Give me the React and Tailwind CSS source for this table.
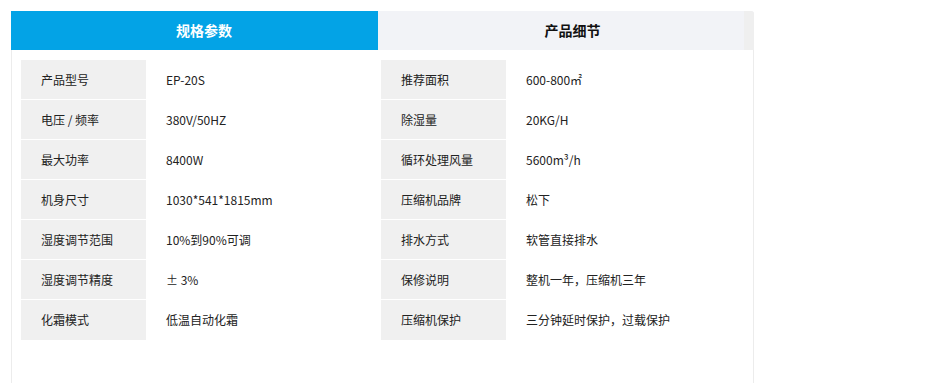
import React from "react";

const left = [
  ["产品型号", "EP-20S"],
  ["电压 / 频率", "380V/50HZ"],
  ["最大功率", "8400W"],
  ["机身尺寸", "1030*541*1815mm"],
  ["湿度调节范围", "10%到90%可调"],
  ["湿度调节精度", "± 3%"],
  ["化霜模式", "低温自动化霜"],
];
const right = [
  ["推荐面积", "600-800㎡"],
  ["除湿量", "20KG/H"],
  ["循环处理风量", "5600m³/h"],
  ["压缩机品牌", "松下"],
  ["排水方式", "软管直接排水"],
  ["保修说明", "整机一年，压缩机三年"],
  ["压缩机保护", "三分钟延时保护，过载保护"],
];

function Table({ rows, w }) {
  return (
    <div className={`flex flex-col ${w}`}>
      {rows.map(([k, v], i) => (
        <div key={k} className={`flex h-[40px] ${i === rows.length - 1 ? "h-[39px]" : "border-b border-white"}`}>
          <div className="w-[125px] bg-[#f0f0f0] pl-[20px] flex items-center text-[12px] text-[#222]">{k}</div>
          <div className="flex-1 bg-white pl-[20px] flex items-center text-[12px] text-[#222]">{v}</div>
        </div>
      ))}
    </div>
  );
}

export default function App() {
  return (
    <div
      className="w-[943px] h-[383px] bg-white pt-[11px] pl-[11px] overflow-hidden"
      style={{ fontFamily: '"Noto Sans CJK SC", "Microsoft YaHei", sans-serif' }}
    >
      <div className="w-[743px] h-[372px] flex flex-col">
        <div className="flex h-[39px]">
          <div className="w-[367px] bg-[#03a3e6] pl-[19px] flex items-center justify-center text-[14px] font-bold text-white">
            规格参数
          </div>
          <div className="flex-1 flex bg-[#f2f3f7] rounded-tr-[3px] overflow-hidden">
            <div className="flex-1 pl-[23px] flex items-center justify-center text-[14px] font-bold text-[#111]">
              产品细节
            </div>
            <div className="w-[10px] bg-[#efefef]" />
          </div>
        </div>
        <div className="flex-1 border-l border-r border-[#ececec] pt-[10px] pl-[9px] flex">
          <Table rows={left} w="w-[360px]" />
          <Table rows={right} w="w-[362px]" />
        </div>
      </div>
    </div>
  );
}
